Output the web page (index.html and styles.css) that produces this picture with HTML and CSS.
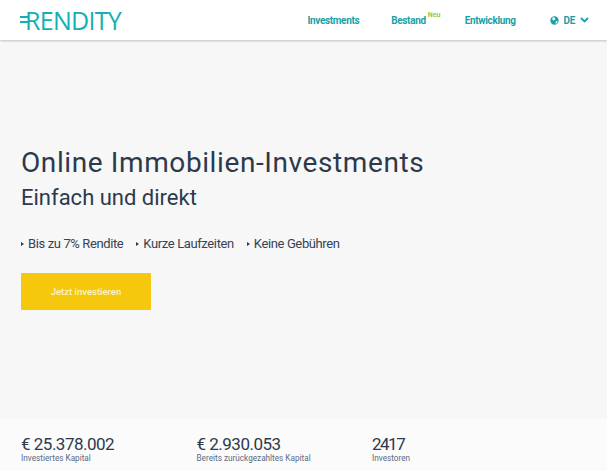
FILE: index.html
```html
<!DOCTYPE html>
<html lang="de">
<head>
<meta charset="utf-8">
<title>Rendity</title>
<link rel="stylesheet" href="styles.css">
</head>
<body>
<header class="topbar">
  <a class="logo"><span class="logo-mark"><span class="logo-bars"></span>R</span>ENDITY</a>
  <nav class="nav">
    <a class="nav-link nav-investments">Investments</a>
    <a class="nav-link nav-bestand">Bestand<sup class="new">Neu</sup></a>
    <a class="nav-link nav-entwicklung">Entwicklung</a>
    <a class="nav-link nav-lang">
      <svg class="globe" width="9" height="9" viewBox="0 0 10 10"><circle cx="5" cy="5" r="4.6" fill="#1a9fa8"/><path d="M3 1.5l2.5.5.5 1.5-2 1.5-1.5-1zM6.5 5.5l2 .2-1 2.6-1.3.2z" fill="#fff"/></svg>
      DE
      <svg class="chev" width="9" height="6" viewBox="0 0 9 6"><path d="M1 1l3.5 3.5L8 1" fill="none" stroke="#1a9fa8" stroke-width="1.8"/></svg>
    </a>
  </nav>
</header>
<main class="hero">
  <h1 class="title">Online Immobilien-Investments</h1>
  <h2 class="subtitle">Einfach und direkt</h2>
  <ul class="points">
    <li class="point">Bis zu 7% Rendite</li>
    <li class="point">Kurze Laufzeiten</li>
    <li class="point">Keine Gebühren</li>
  </ul>
  <a class="cta">Jetzt investieren</a>
</main>
<section class="stats">
  <div class="stat stat-a"><div class="num">€ 25.378.002</div><div class="label">Investiertes Kapital</div></div>
  <div class="stat stat-b"><div class="num">€ 2.930.053</div><div class="label">Bereits zurückgezahltes Kapital</div></div>
  <div class="stat"><div class="num num-short">2417</div><div class="label">Investoren</div></div>
</section>
</body>
</html>
```
FILE: styles.css
```css
* { box-sizing: border-box; }
html, body { margin: 0; height: 100%; }
body {
  height: 471px;
  overflow: hidden;
  display: flex;
  flex-direction: column;
  background: #f7f7f8;
  font-family: Roboto, "Liberation Sans", sans-serif;
  color: #2c3a4b;
}
.topbar {
  height: 40px;
  flex: none;
  display: flex;
  align-items: center;
  justify-content: space-between;
  padding: 0 18px 0 25px;
  background: #fff;
  box-shadow: 0 1px 2px rgba(60, 70, 90, .3);
}
.logo {
  font: 400 25px/1 "Open Sans", sans-serif;
  color: #13b0b3;
  letter-spacing: -.7px;
  display: flex;
  align-items: center;
}
.logo-mark { position: relative; }
.logo-bars {
  position: absolute;
  left: -5px;
  top: 8px;
  width: 9px;
  height: 7px;
  border-top: 2px solid #13b0b3;
  border-bottom: 2px solid #13b0b3;
}
.nav { display: flex; align-items: center; }
.nav-link {
  font-size: 10px;
  font-weight: 700;
  letter-spacing: -.35px;
  color: #1a9fa8;
  white-space: nowrap;
  display: flex;
  align-items: center;
}
.nav-investments { margin-right: 32px; }
.nav-bestand { margin-right: 39px; position: relative; }
.nav-entwicklung { margin-right: 34px; }
.new {
  position: absolute;
  left: calc(100% + 2px);
  top: -3px;
  font-size: 7px;
  letter-spacing: 0;
  color: #a5c81e;
  line-height: 1;
}
.globe { margin-right: 5px; }
.chev { margin-left: 5px; }
.hero { flex: 1; padding: 108px 21px 0; }
.title {
  margin: 0;
  font-size: 28px;
  font-weight: 400;
  line-height: 30px;
  letter-spacing: .6px;
}
.subtitle {
  margin: 7px 0 0;
  font-size: 22px;
  font-weight: 400;
  line-height: 26px;
}
.points {
  list-style: none;
  display: flex;
  gap: 13px;
  margin: 25px 0 0;
  padding: 0;
  font-size: 13px;
  line-height: 16px;
  letter-spacing: -.38px;
  color: #364353;
}
.point::before {
  content: "";
  display: inline-block;
  border-left: 3px solid #2c3a4b;
  border-top: 2px solid transparent;
  border-bottom: 2px solid transparent;
  margin-right: 4px;
  vertical-align: 2px;
}
.cta {
  display: flex;
  align-items: center;
  justify-content: center;
  width: 130px;
  height: 37px;
  margin-top: 21px;
  background: #f5c80e;
  border-radius: 1px;
  color: #fdf3c4;
  font-size: 9.5px;
  font-weight: 500;
}
.stats {
  flex: none;
  height: 52px;
  display: flex;
  padding: 17px 21px 0;
  background: #fbfbfb;
}
.stat-a, .stat-b { width: 175.5px; }
.num { font-size: 17px; line-height: 17px; letter-spacing: -.5px; }
.num-short { letter-spacing: -1.5px; }
.label { font-size: 8.2px; line-height: 10px; color: #5a6a80; }
```
